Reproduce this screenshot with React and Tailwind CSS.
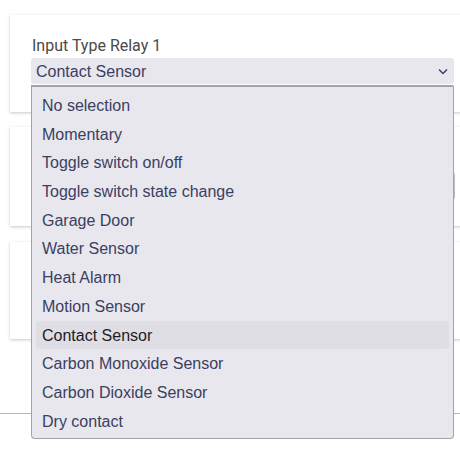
import React from 'react';

const options = [
  'No selection',
  'Momentary',
  'Toggle switch on/off',
  'Toggle switch state change',
  'Garage Door',
  'Water Sensor',
  'Heat Alarm',
  'Motion Sensor',
  'Contact Sensor',
  'Carbon Monoxide Sensor',
  'Carbon Dioxide Sensor',
  'Dry contact',
];

const Card = ({ className, children }) => (
  <div className={`w-[480px] bg-white shadow-[0_1px_3px_rgba(0,0,0,0.22)] ${className}`}>{children}</div>
);

const App = () => {
  const selected = 'Contact Sensor';

  return (
    <div className="relative w-[460px] h-[449px] overflow-hidden bg-white [font-family:'Liberation_Sans',Arial,sans-serif]">
      {/* Settings cards */}
      <div className="flex flex-col pl-[10px] pt-[15px]">
        <Card className="h-[97px] pl-[21px] pt-[21px]">
          <div className="pl-[1px] [font-family:Roboto,sans-serif] text-[16px] leading-[20px] text-[#4a4a4a]">
            Input Type Relay 1
          </div>
          <div className="mt-[2px] flex h-[26px] w-[423px] items-center justify-between rounded-[3px] bg-[#e8e7ed] pl-[5px] pr-[6px] text-[16px] text-[#3a4062]">
            <span className="pt-[1px]">{selected}</span>
            <svg width="10" height="7" viewBox="0 0 10 7" fill="none">
              <polyline points="1,1.5 5,5.5 9,1.5" stroke="#3a4062" strokeWidth="1.5" />
            </svg>
          </div>
        </Card>
        <Card className="mt-[15px] h-[99px] pl-[21px] pt-[45px]">
          <div className="h-[28px] w-[424px] rounded-[3px] border border-[#bdbdbd]" />
        </Card>
        <Card className="mt-[16px] h-[97px]" />
      </div>
      <div className="mt-[74px] border-t border-[#b5b5b5]" />

      {/* Open dropdown list */}
      <div className="absolute left-[31px] top-[85px] h-[354px] w-[423px] rounded-b-[4px] rounded-tr-[2px] border border-t-2 border-[#a3a3a3] bg-[#e8e7ed] px-[4px] pt-[4px] text-[16px]">
        {options.map((o) => (
          <div
            key={o}
            className={`h-[28.7px] rounded-[3px] pl-[6px] pt-[1px] leading-[28.7px] ${
              o === selected ? 'bg-[#dfdee5] text-[#1c1c24]' : 'text-[#3a4062]'
            }`}
          >
            {o}
          </div>
        ))}
      </div>
    </div>
  );
};

export default App;
